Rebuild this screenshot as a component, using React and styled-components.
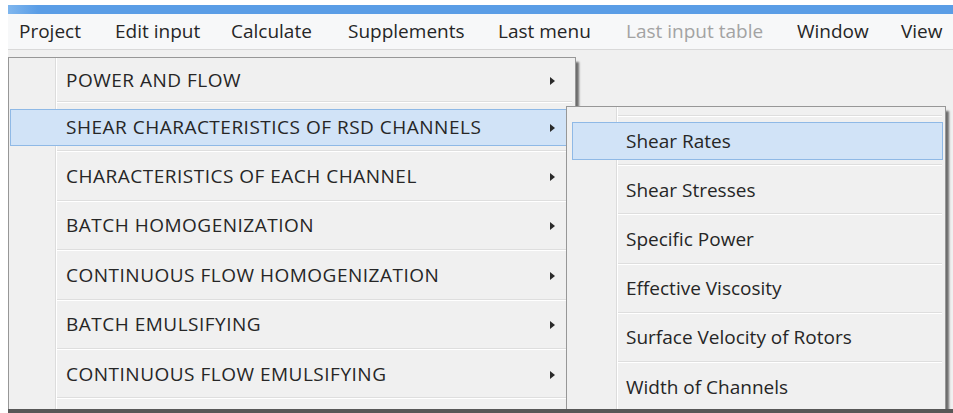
import React from 'react';
import styled, { createGlobalStyle, css } from 'styled-components';

const GlobalStyle = createGlobalStyle`
    body {
        margin: 0;
        background: #fff;
        font-family: "Open Sans", "Noto Sans", sans-serif;
        color: #262626;
    }
`;

const Frame = styled.div`
    width: 945px;
    margin-left: 8px;
    padding-top: 5px;
`;

const TitleStrip = styled.div`
    height: 9px;
    background: linear-gradient(to right, #7fb6ee 0, #5a9de6 30px, #5a9de6 100%);
`;

const MenuBar = styled.div`
    display: flex;
    align-items: center;
    height: 36px;
    padding-left: 11px;
    padding-bottom: 2px;
    box-sizing: border-box;
    background: #f7f8f9;
    border-bottom: 1px solid #d9d9d9;
    font-size: 19px;
`;

const BarItem = styled.span`
    flex: none;
    width: ${(p) => (p.$w ? `${p.$w}px` : 'auto')};
    color: ${(p) => (p.$disabled ? '#a3a3a3' : '#262626')};
    white-space: nowrap;
`;

const Workspace = styled.div`
    position: relative;
    height: 359px;
    overflow: hidden;
    background: #f0f0f0;
`;

const BottomEdge = styled.div`
    height: 4px;
    background: #575757;
`;

const Menu = styled.div`
    position: absolute;
    left: ${(p) => p.$left}px;
    top: ${(p) => p.$top}px;
    width: ${(p) => p.$width}px;
    height: 420px;
    box-sizing: border-box;
    border: 1px solid #979797;
    background:
        linear-gradient(to right,
            transparent ${(p) => p.$gutter}px,
            #dcdcdc ${(p) => p.$gutter}px,
            #dcdcdc ${(p) => p.$gutter + 1}px,
            #ffffff ${(p) => p.$gutter + 1}px,
            #ffffff ${(p) => p.$gutter + 2}px,
            transparent ${(p) => p.$gutter + 2}px),
        #f0f0f0;
    box-shadow: 4px 4px 2px -1px rgba(0, 0, 0, 0.55);
    font-size: 19px;
    letter-spacing: ${(p) => p.$tracking || 0}px;
`;

const Spacer = styled.div`
    position: relative;
    height: ${(p) => p.$h}px;

    &::after {
        content: '';
        position: absolute;
        left: ${(p) => p.$gutter + 2}px;
        right: 3px;
        bottom: 0;
        height: 1px;
        background: #dedede;
        box-shadow: 0 1px 0 #fff;
    }
`;

const Row = styled.div`
    position: relative;
    display: flex;
    align-items: center;
    height: ${(p) => p.$h}px;
    padding-left: ${(p) => p.$indent}px;
    box-sizing: border-box;
    white-space: nowrap;

    &::after {
        content: '';
        position: absolute;
        left: ${(p) => p.$gutter + 2}px;
        right: 3px;
        bottom: 0;
        height: 1px;
        background: #dedede;
        box-shadow: 0 1px 0 #fff;
    }

    ${(p) =>
        p.$active &&
        css`
            &::before {
                content: '';
                position: absolute;
                left: ${p.$hlLeft}px;
                right: 2px;
                top: ${p.$hlTop}px;
                bottom: 5px;
                background: #d1e3f7;
                border: 1px solid #8fb9e6;
            }
        `}
`;

const Label = styled.span`
    position: relative;
`;

const Arrow = styled.span`
    position: absolute;
    right: 20px;
    top: 50%;
    margin-top: -3px;
    width: 0;
    height: 0;
    border-left: 5px solid #2a2a2a;
    border-top: 4px solid transparent;
    border-bottom: 4px solid transparent;
`;

const barItems = [
    { text: 'Project', w: 96 },
    { text: 'Edit input', w: 116 },
    { text: 'Calculate', w: 117 },
    { text: 'Supplements', w: 150 },
    { text: 'Last menu', w: 128 },
    { text: 'Last input table', w: 171, disabled: true },
    { text: 'Window', w: 104 },
    { text: 'View' },
];

const mainItems = [
    'POWER AND FLOW',
    'SHEAR CHARACTERISTICS OF RSD CHANNELS',
    'CHARACTERISTICS OF EACH CHANNEL',
    'BATCH HOMOGENIZATION',
    'CONTINUOUS FLOW HOMOGENIZATION',
    'BATCH EMULSIFYING',
    'CONTINUOUS FLOW EMULSIFYING',
];

const subItems = [
    'Shear Rates',
    'Shear Stresses',
    'Specific Power',
    'Effective Viscosity',
    'Surface Velocity of Rotors',
    'Width of Channels',
];

export default function App() {
    return (
        <>
            <GlobalStyle />
            <Frame>
                <TitleStrip />
                <MenuBar>
                    {barItems.map((b) => (
                        <BarItem key={b.text} $w={b.w} $disabled={b.disabled}>
                            {b.text}
                        </BarItem>
                    ))}
                </MenuBar>
                <Workspace>
                    <Menu $left={0} $top={7} $width={568} $gutter={46} $tracking={0.5}>
                        {mainItems.map((item, i) => (
                            <Row
                                key={item}
                                $h={i === 0 ? 44 : 49.4}
                                $indent={57}
                                $gutter={46}
                                $active={i === 1}
                                $hlLeft={1}
                                $hlTop={7}
                            >
                                <Label>{item}</Label>
                                <Arrow />
                            </Row>
                        ))}
                    </Menu>
                    <Menu $left={558} $top={56} $width={380} $gutter={49}>
                        <Spacer $h={9} $gutter={49} />
                        {subItems.map((item, i) => (
                            <Row
                                key={item}
                                $h={49.2}
                                $indent={59}
                                $gutter={49}
                                $active={i === 0}
                                $hlLeft={5}
                                $hlTop={6}
                            >
                                <Label>{item}</Label>
                            </Row>
                        ))}
                    </Menu>
                </Workspace>
                <BottomEdge />
            </Frame>
        </>
    );
}
